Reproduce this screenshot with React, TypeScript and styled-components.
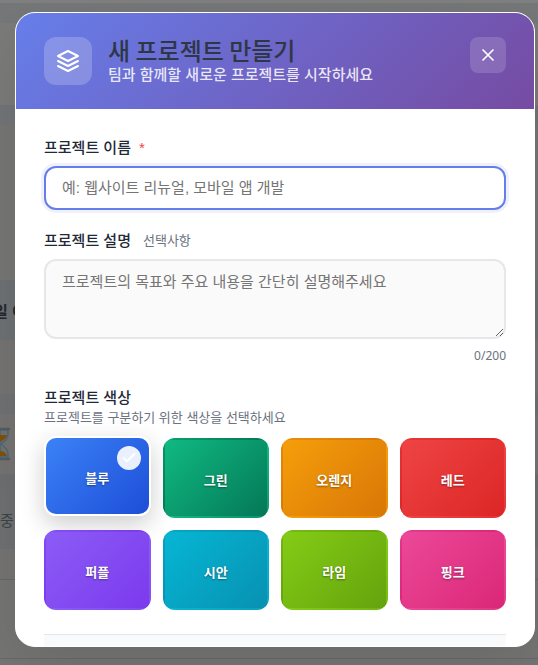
import React, { useState } from "react";
import styled, { createGlobalStyle } from "styled-components";

const GlobalStyle = createGlobalStyle`
  *, *::before, *::after { box-sizing: border-box; }
  body {
    margin: 0;
    background: #737373;
    font-family: "Liberation Sans", "Noto Sans CJK KR", sans-serif;
    color: #1f2937;
  }
  button, input, textarea { font-family: inherit; }
`;

const Screen = styled.div`
  position: relative;
  height: 100vh;
  overflow: hidden;
  padding: 12px 3px 18px 15px;
`;

const Backdrop = styled.div`
  position: absolute;
  inset: 0;
  display: flex;
  flex-direction: column;
  overflow: hidden;
`;

const Band = styled.div<{ $height: number; $color: string; $line?: boolean }>`
  display: flex;
  align-items: center;
  flex: none;
  height: ${(p) => p.$height}px;
  background: ${(p) => p.$color};
  border-bottom: ${(p) => (p.$line ? "1px solid #686868" : "none")};
  overflow: hidden;
`;

const BandText = styled.span<{ $strong?: boolean }>`
  margin-left: ${(p) => (p.$strong ? -6 : 0)}px;
  font-size: 15px;
  font-weight: ${(p) => (p.$strong ? 700 : 400)};
  color: ${(p) => (p.$strong ? "#23282f" : "#3f4348")};
  white-space: nowrap;
`;

const Dialog = styled.form`
  position: relative;
  display: flex;
  flex-direction: column;
  height: 100%;
  overflow: hidden;
  background: #fff;
  border: 1px solid #fff;
  border-radius: 20px;
  box-shadow: 0 20px 60px rgba(0, 0, 0, 0.1);
`;

const Header = styled.header`
  display: flex;
  align-items: flex-start;
  gap: 16px;
  flex: none;
  padding: 24px 28px;
  background: linear-gradient(135deg, #667eea 0%, #764ba2 100%);
`;

const HeaderIcon = styled.div`
  display: grid;
  place-items: center;
  flex: none;
  width: 48px;
  height: 48px;
  border-radius: 12px;
  background: rgba(255, 255, 255, 0.2);
  color: #fff;
`;

const Heading = styled.div`
  flex: 1;
  min-width: 0;
`;

const Title = styled.h2`
  margin: 0;
  padding-bottom: 2px;
  font-family: "Noto Sans CJK KR", sans-serif;
  font-size: 24px;
  line-height: 26px;
  font-weight: 500;
  color: #2d3748;
`;

const Subtitle = styled.p`
  margin: 0;
  font-size: 15px;
  line-height: 20px;
  font-weight: 500;
  color: rgba(255, 255, 255, 0.85);
`;

const CloseButton = styled.button`
  display: grid;
  place-items: center;
  flex: none;
  width: 36px;
  height: 36px;
  padding: 0;
  border: 0;
  border-radius: 8px;
  background: rgba(255, 255, 255, 0.15);
  color: #fff;
  cursor: pointer;
`;

const Body = styled.div`
  flex: 1;
  min-height: 0;
  overflow: hidden;
  padding: 28px 28px 0;
`;

const Field = styled.div<{ $gap: number }>`
  display: flex;
  flex-direction: column;
  margin-bottom: ${(p) => p.$gap}px;
`;

const Label = styled.label`
  display: flex;
  align-items: center;
  margin-bottom: 8px;
  font-size: 15px;
  line-height: 21px;
  font-weight: 500;
`;

const Required = styled.span`
  margin-left: 8px;
  font-weight: 400;
  color: #ef4444;
`;

const Optional = styled.span`
  margin-left: 12px;
  font-size: 13px;
  font-weight: 400;
  color: #6b7280;
`;

const TextInput = styled.input`
  width: 100%;
  height: 44px;
  padding: 0 16px 2px;
  border: 2px solid #667eea;
  border-radius: 12px;
  outline: none;
  background: #fff;
  box-shadow: 0 0 0 3px rgba(102, 126, 234, 0.1);
  font-size: 15px;
  color: #1f2937;
  &::placeholder { color: #757575; }
`;

const TextArea = styled.textarea`
  display: block;
  width: 100%;
  height: 80px;
  padding: 10px 16px;
  border: 2px solid #e5e7eb;
  border-radius: 12px;
  outline: none;
  background: #fafafa;
  font-size: 15px;
  line-height: 22px;
  color: #1f2937;
  resize: vertical;
  &::placeholder { color: #757575; }
`;

const Counter = styled.output`
  margin-top: 8px;
  font-family: "Noto Sans", sans-serif;
  font-size: 12px;
  line-height: 18px;
  text-align: right;
  color: #6b7280;
`;

const ColorGroup = styled.fieldset`
  min-width: 0;
  margin: 0 0 24px;
  padding: 0;
  border: 0;
`;

const Legend = styled.legend`
  padding: 0;
  font-size: 15px;
  line-height: 21px;
  font-weight: 500;
`;

const Hint = styled.p`
  margin: 0 0 10px;
  font-size: 13px;
  line-height: 20px;
  color: #6b7280;
`;

const Swatches = styled.div`
  display: grid;
  grid-template-columns: repeat(4, 1fr);
  gap: 12px;
`;

const Swatch = styled.button<{ $from: string; $to: string; $selected: boolean }>`
  position: relative;
  display: grid;
  place-items: center;
  height: 80px;
  padding: 2px 0 0;
  border: 2px solid ${(p) => (p.$selected ? "#fff" : "transparent")};
  border-radius: 12px;
  background: linear-gradient(135deg, ${(p) => p.$from}, ${(p) => p.$to});
  box-shadow: ${(p) => (p.$selected ? "0 8px 25px rgba(0, 0, 0, 0.2)" : "none")};
  transform: ${(p) => (p.$selected ? "translateY(-2px)" : "none")};
  font-size: 13px;
  font-weight: 700;
  color: #fff;
  text-shadow: 0 1px 2px rgba(0, 0, 0, 0.4);
  cursor: pointer;
`;

const CheckBadge = styled.span`
  position: absolute;
  top: 8px;
  right: 8px;
  display: grid;
  place-items: center;
  width: 24px;
  height: 24px;
  border-radius: 50%;
  background: rgba(255, 255, 255, 0.9);
`;

const Footer = styled.footer`
  height: 12px;
  border-top: 1px solid #e5e7eb;
  background: #f9fafb;
`;

const COLORS = [
  { name: "블루", from: "#3b82f6", to: "#1d4ed8" },
  { name: "그린", from: "#10b981", to: "#047857" },
  { name: "오렌지", from: "#f59e0b", to: "#d97706" },
  { name: "레드", from: "#ef4444", to: "#dc2626" },
  { name: "퍼플", from: "#8b5cf6", to: "#7c3aed" },
  { name: "시안", from: "#06b6d4", to: "#0891b2" },
  { name: "라임", from: "#84cc16", to: "#65a30d" },
  { name: "핑크", from: "#ec4899", to: "#db2777" },
];

function LayersIcon() {
  return (
    <svg width="24" height="24" viewBox="0 0 24 24" fill="none" stroke="currentColor" strokeWidth="2" strokeLinecap="round" strokeLinejoin="round" aria-hidden="true">
      <path d="M12 2L2 7l10 5 10-5-10-5z" />
      <path d="M2 12l10 5 10-5" />
      <path d="M2 17l10 5 10-5" />
    </svg>
  );
}

function CloseIcon() {
  return (
    <svg width="20" height="20" viewBox="0 0 24 24" fill="none" stroke="currentColor" strokeWidth="2" strokeLinecap="round" aria-hidden="true">
      <path d="M18 6L6 18M6 6l12 12" />
    </svg>
  );
}

function CheckIcon() {
  return (
    <svg width="16" height="16" viewBox="0 0 24 24" fill="none" stroke="#fff" strokeWidth="3" strokeLinecap="round" strokeLinejoin="round" aria-hidden="true">
      <path d="M20 6L9 17l-5-5" />
    </svg>
  );
}

function Hourglass() {
  return (
    <svg width="11" height="34" viewBox="0 0 11 34" aria-hidden="true">
      <path d="M0 3H8V8Q8 12 1 17Q8 22 8 27V30H0Z" fill="#72736f" stroke="#49687d" strokeWidth="1.5" />
      <path d="M0 8H7Q6 12 0 15ZM0 24Q5 24 7 29H0Z" fill="#80500c" />
      <path d="M0 2H10M0 32H10" stroke="#555c60" strokeWidth="2.5" />
    </svg>
  );
}

export default function App() {
  const [name, setName] = useState("");
  const [description, setDescription] = useState("");
  const [color, setColor] = useState("블루");

  return (
    <>
      <GlobalStyle />
      <Screen>
        <Backdrop aria-hidden="true">
          <Band $height={3} $color="#808080" />
          <Band $height={20} $color="#757778" />
          <Band $height={82} $color="#7b7b7a" />
          <Band $height={20} $color="#727578" />
          <Band $height={155} $color="#767675" />
          <Band $height={60} $color="#6e7173"><BandText $strong>일 이</BandText></Band>
          <Band $height={54} $color="#757473" />
          <Band $height={20} $color="#6f7173" />
          <Band $height={60} $color="#767472"><Hourglass /></Band>
          <Band $height={15} $color="#6d6f71" />
          <Band $height={60} $color="#6e7072"><BandText>중</BandText></Band>
          <Band $height={31} $color="#757473" $line />
          <Band $height={79} $color="#757574" $line />
          <Band $height={6} $color="#757575" />
        </Backdrop>
        <Dialog role="dialog" aria-labelledby="dialog-title" onSubmit={(e) => e.preventDefault()}>
          <Header>
            <HeaderIcon><LayersIcon /></HeaderIcon>
            <Heading>
              <Title id="dialog-title">새 프로젝트 만들기</Title>
              <Subtitle>팀과 함께할 새로운 프로젝트를 시작하세요</Subtitle>
            </Heading>
            <CloseButton type="button" aria-label="닫기"><CloseIcon /></CloseButton>
          </Header>
          <Body>
            <Field $gap={20}>
              <Label htmlFor="project-name">프로젝트 이름<Required>*</Required></Label>
              <TextInput id="project-name" value={name} onChange={(e) => setName(e.target.value)} placeholder="예: 웹사이트 리뉴얼, 모바일 앱 개발" />
            </Field>
            <Field $gap={22}>
              <Label htmlFor="project-description">프로젝트 설명<Optional>선택사항</Optional></Label>
              <TextArea id="project-description" maxLength={200} value={description} onChange={(e) => setDescription(e.target.value)} placeholder="프로젝트의 목표와 주요 내용을 간단히 설명해주세요" />
              <Counter htmlFor="project-description">{description.length}/200</Counter>
            </Field>
            <ColorGroup>
              <Legend>프로젝트 색상</Legend>
              <Hint>프로젝트를 구분하기 위한 색상을 선택하세요</Hint>
              <Swatches>
                {COLORS.map((c) => (
                  <Swatch key={c.name} type="button" $from={c.from} $to={c.to} $selected={color === c.name} aria-pressed={color === c.name} onClick={() => setColor(c.name)}>
                    {c.name}
                    {color === c.name && <CheckBadge><CheckIcon /></CheckBadge>}
                  </Swatch>
                ))}
              </Swatches>
            </ColorGroup>
            <Footer />
          </Body>
        </Dialog>
      </Screen>
    </>
  );
}
